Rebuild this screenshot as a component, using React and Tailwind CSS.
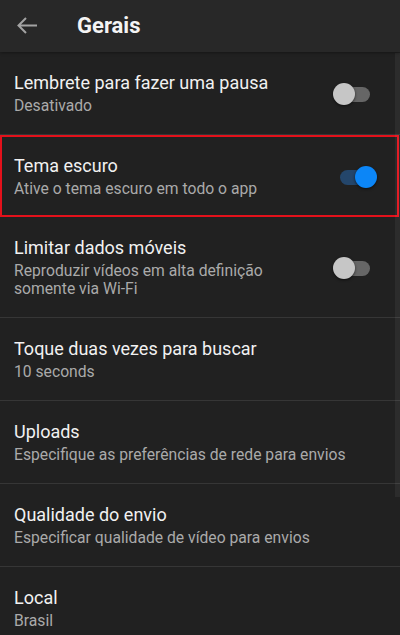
import { useState } from 'react'

const ROWS = [
  { id: 'pausa', title: 'Lembrete para fazer uma pausa', sub: ['Desativado'], toggle: false },
  { id: 'tema', title: 'Tema escuro', sub: ['Ative o tema escuro em todo o app'], toggle: true, highlight: true },
  { id: 'dados', title: 'Limitar dados móveis', sub: ['Reproduzir vídeos em alta definição', 'somente via Wi-Fi'], toggle: false },
  { id: 'toque', title: 'Toque duas vezes para buscar', sub: ['10 seconds'] },
  { id: 'uploads', title: 'Uploads', sub: ['Especifique as preferências de rede para envios'] },
  { id: 'qualidade', title: 'Qualidade do envio', sub: ['Especificar qualidade de vídeo para envios'] },
  { id: 'local', title: 'Local', sub: ['Brasil'] },
]

function Switch({ on, onChange }) {
  return (
    <button onClick={onChange} className="relative w-[45px] h-[22px] shrink-0">
      <span
        className={
          on
            ? 'absolute left-[8px] right-[8px] top-[4px] h-[15px] rounded-full bg-[#24466b]'
            : 'absolute left-[8px] right-[8px] top-[4px] h-[15px] rounded-full bg-[#666666]'
        }
      />
      <span
        className={
          on
            ? 'absolute right-0 top-0 w-[22px] h-[22px] rounded-full bg-[#0c86f7] shadow-[0_1px_3px_rgba(0,0,0,0.6)]'
            : 'absolute left-0 top-0 w-[22px] h-[22px] rounded-full bg-[#c6c6c6] shadow-[0_1px_3px_rgba(0,0,0,0.6)]'
        }
      />
    </button>
  )
}

export default function App() {
  const [toggles, setToggles] = useState(() => {
    const t = {}
    ROWS.forEach((r) => {
      if (r.toggle !== undefined) t[r.id] = r.toggle
    })
    return t
  })

  return (
    <div className="relative w-[400px] h-[635px] overflow-hidden bg-[#212121] font-['Roboto',sans-serif]">
      <header className="relative z-10 h-[52px] flex items-center bg-[#282828] shadow-[0_1px_3px_rgba(0,0,0,0.35)]">
        <svg width="56" height="52" viewBox="0 0 56 52" className="shrink-0">
          <path d="M19 25.5H37M26 18L18.5 25.5L26 33" fill="none" stroke="#a3a3a3" strokeWidth="2" />
        </svg>
        <h1 className="ml-[21px] text-[22px] font-bold text-[#f4f4f4] leading-none">Gerais</h1>
      </header>

      <div className="flex flex-col">
        {ROWS.map((r) => (
          <div
            key={r.id}
            className={
              r.highlight
                ? 'flex items-center border-2 border-[#e3111b] mr-[1px] pl-[12px] pr-[20px] pt-[18px] pb-[17px]'
                : 'flex items-center border-b border-[#363636] pl-[14px] pr-[22px] pt-5 pb-[19px]'
            }
          >
            <div className="flex-1 min-w-0">
              <div className="text-[18px] leading-[22px] text-[#f1f1f1]">{r.title}</div>
              <div className="mt-[3px] text-[15.7px] leading-[18px] text-[#aaaaaa]">
                {r.sub.map((s) => (
                  <div key={s}>{s}</div>
                ))}
              </div>
            </div>
            {r.toggle !== undefined && (
              <Switch on={toggles[r.id]} onChange={() => setToggles({ ...toggles, [r.id]: !toggles[r.id] })} />
            )}
          </div>
        ))}
      </div>

      <div className="absolute right-0 top-[53px] w-[5px] h-[444px] bg-white/[0.05]" />
    </div>
  )
}
